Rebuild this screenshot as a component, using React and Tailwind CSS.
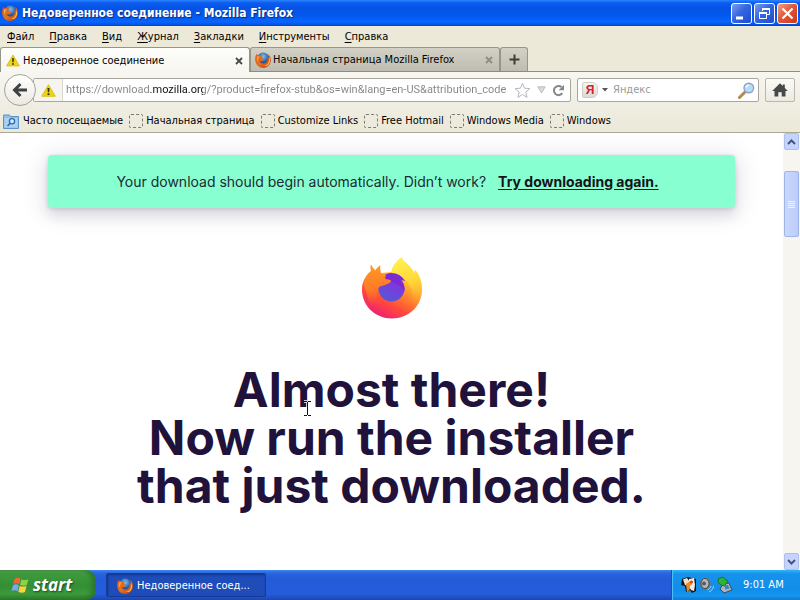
import React from "react";

const ui = "font-['DejaVu_Sans_Condensed','DejaVu_Sans',sans-serif]";

function OldFirefox({ className }) {
  return (
    <svg viewBox="0 0 16 16" className={className} aria-hidden="true">
      <defs>
        <radialGradient id="globe" cx="0.5" cy="0.3" r="0.7">
          <stop offset="0" stopColor="#7fc4ee" />
          <stop offset="0.6" stopColor="#2a5ea8" />
          <stop offset="1" stopColor="#142a66" />
        </radialGradient>
        <linearGradient id="fur" x1="0" y1="0" x2="1" y2="1">
          <stop offset="0" stopColor="#d9541a" />
          <stop offset="0.5" stopColor="#e8701c" />
          <stop offset="1" stopColor="#b93a12" />
        </linearGradient>
      </defs>
      <circle cx="8.2" cy="7" r="6.4" fill="url(#globe)" />
      <path d="M1.2 2.2C.2 4.400 0 6.500.2 8.500.7 13 4 15.900 8.200 15.900c4.500 0 7.700-3.500 7.700-7.900 0-2.600-1-4.900-2.900-6.300.9 1.600 1.200 3 .9 4.600-.3-.8-.7-1.300-1.200-1.700.6 3.700-.9 6.700-4 6.900-2.300.1-3.900-1.400-3.900-2.600.9.600 2.300.5 3-.3.5-.5 1.300-.5 1.400-1 0-.5-1-1-1.600-1.100-.8-.2-1.200-.8-1.200-1.200.3-.7 1-.9 1.700-1.500-.9 0-1.800-.1-2.700-.7-1-.3-1.900-.2-2.700.2-.7-.4-1.200-1-1.500-2.100z" fill="url(#fur)" />
      <path d="M14 5.500c.8 4.600-1.800 8.300-5.800 8.400 4 .9 7-2 6.800-6-.1-1-.5-1.800-1-2.400z" fill="#fbc944" />
      <path d="M2 4.600c1-.5 2-.3 2.900.1-.9.500-1.500 1.300-1.500 2.500-.6.700-.6 2 .1 3.200C1.700 9 1.300 6.500 2 4.600z" fill="#f5a43a" />
    </svg>
  );
}

function Warning({ className }) {
  return (
    <svg viewBox="0 0 16 14" className={className} aria-hidden="true">
      <path d="M8 .8 15.300 13.200H.7z" fill="#ecd41c" stroke="#d8bd10" strokeWidth="1" strokeLinejoin="round" />
      <path d="M6.900 4.300h2.200l-.4 4.700H7.300zM7 10h2v1.800H7z" fill="#35300a" />
    </svg>
  );
}

function CloseX({ className }) {
  return (
    <svg viewBox="0 0 8 8" className={className} aria-hidden="true">
      <path d="M1 1l6 6M7 1L1 7" stroke="currentColor" strokeWidth="1.800" />
    </svg>
  );
}

function FirefoxLogo() {
  return (
    <svg viewBox="0 0 62 64" className="h-16 w-[62px]" role="img" aria-label="Firefox">
      <defs>
        <linearGradient id="body" x1="0.85" y1="0.1" x2="0.35" y2="1">
          <stop offset="0" stopColor="#fff04a" />
          <stop offset="0.3" stopColor="#ffc035" />
          <stop offset="0.5" stopColor="#ff8a2b" />
          <stop offset="0.75" stopColor="#ff4a3a" />
          <stop offset="1" stopColor="#f01f72" />
        </linearGradient>
        <linearGradient id="flame" x1="0.4" y1="0" x2="0.6" y2="1">
          <stop offset="0" stopColor="#fff24f" />
          <stop offset="0.5" stopColor="#ffd738" />
          <stop offset="1" stopColor="#ff9c2e" stopOpacity="0" />
        </linearGradient>
        <linearGradient id="core" x1="0.8" y1="0" x2="0.3" y2="1">
          <stop offset="0" stopColor="#8a2be0" />
          <stop offset="0.5" stopColor="#7440dc" />
          <stop offset="1" stopColor="#5458d8" />
        </linearGradient>
        <linearGradient id="head" x1="0.3" y1="0" x2="0.4" y2="1">
          <stop offset="0" stopColor="#ff9a24" />
          <stop offset="0.6" stopColor="#ff7a28" />
          <stop offset="1" stopColor="#ff5a34" stopOpacity="0" />
        </linearGradient>
      </defs>
      <path d="M10 8.500c-.6 2.300-.5 4.500.1 6.500C4 20 1 26.500 1 33.500 1 50 14.500 62.500 31 62.500S61 50 61 33.500c0-8.500-3-15-7-19.500l-.5 3.500C50 9.500 43.500 7 40.500 1.500c-5 3.200-9 8.500-10 14.500L20 17c-.8-2.500-1.200-5-.8-7.500-2 1.200-3.700 3-4.700 5C12.500 12.700 11 11 10 8.500z" fill="url(#body)" />
      <path d="M40.500 1.500c3 5.500 9.500 8 13 16l.5-3.500c4 4.500 7 11 7 19.500 0 8-4 15-9 19 1-9 0-19-5-26-4.500-5-12-7-16.500-10 1-6 5-11.800 10-15z" fill="url(#flame)" />
      <circle cx="30.500" cy="32.500" r="13" fill="url(#core)" />
      <path d="M24 18.500c7-3.500 16-1 20 6.500-2.300-.8-3.500-.8-5-.5 3.500 3 5 7 4.500 11-3-6-9.500-10-18-10z" fill="#7a2cd2" />
      <path d="M10 8.500c-.6 2.300-.5 4.500.1 6.500C5.500 18.500 3.500 23 3 28.500L8 46c2 4 7 6 13 2-3-3.500-5.300-8-4.800-13 .2-1.800.8-3 1.800-4 3-1.500 7.500-2 10-3.700 1.800-1 2.600-2.500 1.500-3.300-1.500-.6-3.500-.5-5-1-1-1.500-.5-3 1-4.500-2 0-4 0-5.500-1-.8-2.800-1.200-5.500-.8-8-2 1.200-3.700 3-4.700 5C12.500 12.700 11 11 10 8.500z" fill="url(#head)" />
    </svg>
  );
}

function WindowsFlag() {
  return (
    <svg viewBox="0 0 18 18" className="h-[18px] w-[18px]" aria-hidden="true">
      <path d="M3.500 3C5.500 1.300 7.800 1.400 9.500 2.700L8.200 8.300C6.400 7 4 7 2.200 8.300z" fill="#ee6a35" />
      <path d="M10.400 3.200c2 1.200 4.400 1.200 7 0L15.800 8.900c-2.200 1.100-4.600 1-6.800-.2z" fill="#8fd04a" />
      <path d="M1.900 9.400c2-1.400 4.300-1.400 6 0l-1.400 5.900c-1.700-1.300-4-1.200-6 0z" fill="#7ba6f5" />
      <path d="M8.800 9.700c2.200 1.200 4.400 1.200 6.800 0L14 16c-2 1.100-4.600 1-6.700-.3z" fill="#fbd33b" />
    </svg>
  );
}

const captionBase = "flex h-[21px] w-[21px] items-center justify-center rounded-[3px] border border-white";

function TitleBar() {
  return (
    <header className="flex h-[26px] shrink-0 items-center bg-[linear-gradient(#2b83ff_0px,#0a5cf0_3px,#0553e4_8px,#0458ee_16px,#0666ff_22px,#0450dc_25px,#0340bb_26px)] pr-[2px] pl-[2px]">
      <OldFirefox className="h-4 w-4 shrink-0" />
      <h1 className="ml-1 flex-1 truncate text-[12px] leading-[18px] font-bold text-white [text-shadow:1px_1px_1px_#0a2a80]">
        Недоверенное соединение - Mozilla Firefox
      </h1>
      <div className="flex gap-[2px]">
        <button aria-label="Свернуть" className={captionBase + " bg-[linear-gradient(135deg,#7e9cf0,#3566e0_45%,#1d4ccf)]"}>
          <svg viewBox="0 0 19 19" className="h-[19px] w-[19px]"><path d="M4 12.500h7v3H4z" fill="#fff" /></svg>
        </button>
        <button aria-label="Свернуть в окно" className={captionBase + " bg-[linear-gradient(135deg,#7e9cf0,#3566e0_45%,#1d4ccf)]"}>
          <svg viewBox="0 0 19 19" className="h-[19px] w-[19px]" fill="none" stroke="#fff">
            <path d="M7.500 7V4.500h7v6H12" /><path d="M7 5h8" strokeWidth="2" />
            <path d="M4.500 8.500h7v6h-7z" /><path d="M4 9h8" strokeWidth="2" />
          </svg>
        </button>
        <button aria-label="Закрыть" className={captionBase + " bg-[linear-gradient(135deg,#f0a088,#e2583a_45%,#c8391a)]"}>
          <svg viewBox="0 0 19 19" className="h-[19px] w-[19px]"><path d="M4.500 4.500l10 10M14.500 4.500l-10 10" stroke="#fff" strokeWidth="2.200" /></svg>
        </button>
      </div>
    </header>
  );
}

const menus = ["Файл", "Правка", "Вид", "Журнал", "Закладки", "Инструменты", "Справка"];

function MenuBar() {
  return (
    <nav aria-label="Меню" className="flex h-[21px] shrink-0 items-center gap-[15px] pl-[7px]">
      {menus.map((m) => (
        <button key={m} className="leading-4">
          <span className="underline underline-offset-2">{m[0]}</span>{m.slice(1)}
        </button>
      ))}
    </nav>
  );
}

function Tabs() {
  return (
    <div className="flex h-[25px] shrink-0 border-b border-[#8f8d80] bg-[#ece9d8]">
      <div className="-mb-px flex w-[250px] items-center rounded-t-[3px] border border-b-0 border-[#97958a] bg-[linear-gradient(#fdfdfa,#f7f6f0)] pt-px pr-[6px] pl-[5px]">
        <button className="flex min-w-0 flex-1 items-center gap-[3px] text-left">
          <Warning className="h-[13px] w-[14px] shrink-0" />
          <span className="truncate">Недоверенное соединение</span>
        </button>
        <button aria-label="Закрыть вкладку" className="text-[#4a4a4a]"><CloseX className="h-2 w-2" /></button>
      </div>
      <div className="flex w-[250px] items-center rounded-t-[3px] border border-b-0 border-[#97958a] bg-[linear-gradient(#d3d1c5,#bfbdb1)] pt-px pr-[6px] pl-1">
        <button className="flex min-w-0 flex-1 items-center gap-[2px] text-left">
          <OldFirefox className="h-4 w-4 shrink-0" />
          <span className="truncate">Начальная страница Mozilla Firefox</span>
        </button>
        <button aria-label="Закрыть вкладку" className="text-[#8d8b82]"><CloseX className="h-2 w-2" /></button>
      </div>
      <button aria-label="Новая вкладка" className="flex w-7 items-center justify-center rounded-t-[3px] border border-b-0 border-[#97958a] bg-[linear-gradient(#d3d1c5,#bfbdb1)]">
        <svg viewBox="0 0 11 11" className="h-[11px] w-[11px]"><path d="M5.500 0.500v10M0.500 5.500h10" stroke="#3c3c38" strokeWidth="2" /></svg>
      </button>
    </div>
  );
}

function NavBar() {
  return (
    <div className="flex h-9 shrink-0 items-center bg-[linear-gradient(#f7f6f0,#efede1)] pr-[5px] pl-1">
      <button aria-label="Назад" className="z-10 -mr-[3px] flex h-[32px] w-[32px] shrink-0 items-center justify-center rounded-full border border-[#a5a399] bg-[linear-gradient(#ffffff,#ebe9df)]">
        <svg viewBox="0 0 16 16" className="h-4 w-4"><path d="M15 8H3M8.500 2 2.500 8l6 6" fill="none" stroke="#3e4144" strokeWidth="3" /></svg>
      </button>
      <div className="flex h-6 min-w-0 flex-1 items-center rounded-[2px] border border-[#a9a79d] bg-white">
        <div className="flex h-full w-[29px] shrink-0 items-center justify-center border-r border-[#d9d7cd] bg-[#f5f4ee]">
          <Warning className="h-[13px] w-[15px]" />
        </div>
        <input
          aria-label="Адрес"
          readOnly
          value="https://download.mozilla.org/?product=firefox-stub&os=win&lang=en-US&attribution_code"
          className="min-w-0 flex-1 bg-[linear-gradient(90deg,#858585_86px,#101010_86px,#101010_140px,#858585_140px)] bg-clip-text pl-[3px] font-['Roboto',sans-serif] text-transparent outline-none"
        />
        <button aria-label="Добавить закладку">
          <svg viewBox="0 0 17 17" className="h-[17px] w-[17px]"><path d="M8.500 1.200l2.100 5 5.300.4-4.100 3.500 1.300 5.300-4.600-2.900-4.600 2.900 1.300-5.300L1.100 6.600l5.300-.4z" fill="#fdfdfd" stroke="#b4b8c0" strokeLinejoin="round" /></svg>
        </button>
        <button aria-label="Журнал адресов" className="mx-[6px]">
          <svg viewBox="0 0 9 8" className="h-2 w-[9px]"><path d="M.8.800h7.400L4.500 7z" fill="#dcdcdc" stroke="#bcbcbc" /></svg>
        </button>
        <button aria-label="Обновить" className="mr-[5px]">
          <svg viewBox="0 0 13 13" className="h-[13px] w-[13px]"><path d="M10.300 9.200A4.600 4.600 0 1 1 9.500 3" fill="none" stroke="#83868a" strokeWidth="2" /><path d="M12 .8v5.400H6.600z" fill="#83868a" /></svg>
        </button>
      </div>
      <div className="ml-[6px] flex h-6 w-[182px] shrink-0 items-center rounded-[2px] border border-[#a9a79d] bg-white pr-[3px] pl-1">
        <button aria-label="Выбор поисковой системы" className="flex items-center gap-1">
          <span className="flex h-[16px] w-[16px] items-center justify-center rounded-[2px] rounded-r-[6px] border border-[#cfcdc7] bg-[linear-gradient(#f6f5f3,#dddbd7)] font-['Liberation_Sans',sans-serif] text-[12px] leading-none font-bold text-[#d3202c]">Я</span>
          <svg viewBox="0 0 6 4" className="h-1 w-[6px]"><path d="M0 0h6L3 3.500z" fill="#555" /></svg>
        </button>
        <input aria-label="Поиск" placeholder="Яндекс" className="ml-[5px] min-w-0 flex-1 outline-none placeholder:text-[#9b9b9b]" />
        <button aria-label="Искать">
          <svg viewBox="0 0 17 17" className="h-[17px] w-[17px]">
            <path d="M1.500 15.500 7 10" stroke="#b98550" strokeWidth="3" strokeLinecap="round" />
            <circle cx="10.800" cy="6" r="4.800" fill="#b8dcf8" stroke="#8ba4c4" strokeWidth="1.400" />
            <path d="M8 5.500c.4-1.600 1.600-2.400 3-2.400" stroke="#fff" fill="none" strokeWidth="1.200" />
          </svg>
        </button>
      </div>
      <button aria-label="Домой" className="ml-[6px] flex h-6 w-[30px] shrink-0 items-center justify-center rounded-[2px] border border-[#b9b7ac] bg-[linear-gradient(#fbfaf6,#eceae0)]">
        <svg viewBox="0 0 16 14" className="h-[14px] w-4"><path d="M8 .3l2.800 2.700V1.500h2v3.400L15.800 8H13.500v5.500H9.700V9.300H6.300v4.200H2.500V8H.2z" fill="#46494c" /></svg>
      </button>
    </div>
  );
}

const bookmarks = ["Начальная страница", "Customize Links", "Free Hotmail", "Windows Media", "Windows"];

function BookmarksBar() {
  return (
    <nav aria-label="Закладки" className="flex h-[25px] shrink-0 items-center gap-[6px] border-b border-[#aba99a] bg-[linear-gradient(#efede1,#ece9d8)] pt-[2px] pl-[3px] whitespace-nowrap">
      <a href="#frequent" className="flex items-center gap-1">
        <svg viewBox="0 0 16 15" className="h-[15px] w-4" aria-hidden="true">
          <path d="M.5 2.500V1h6l1 1.500h8V14.500H.5z" fill="#8ec0ea" stroke="#5b93c7" />
          <path d="M1.500 4h13v9.500h-13z" fill="#aad2f4" />
          <circle cx="9" cy="7.300" r="2.600" fill="#d6ecfc" stroke="#2d6aa8" strokeWidth="1.300" />
          <path d="M7.200 9.200 4.500 12" stroke="#2d6aa8" strokeWidth="1.600" />
        </svg>
        Часто посещаемые
      </a>
      {bookmarks.map((b) => (
        <a key={b} href="#bookmark" className="flex items-center gap-[3px]">
          <span className="h-[14px] w-[14px] rounded-[2px] border border-dashed border-[#7d7b72]" />
          {b}
        </a>
      ))}
    </nav>
  );
}

const sbButton = "flex h-[17px] w-full shrink-0 items-center justify-center rounded-[2px] border border-[#aebfee] bg-[#c6d4fc]";

function ScrollBar() {
  return (
    <div className="flex w-[17px] shrink-0 flex-col bg-[#f6f5f0] px-px">
      <button aria-label="Прокрутить вверх" className={sbButton}>
        <svg viewBox="0 0 9 6" className="h-[6px] w-[9px]"><path d="M1 5l3.500-3.500L8 5" fill="none" stroke="#43557e" strokeWidth="2" /></svg>
      </button>
      <div className="h-[21px] shrink-0" />
      <div className="flex h-[66px] w-full shrink-0 flex-col items-center justify-center gap-px rounded-[2px] border border-[#9fb4ea] bg-[linear-gradient(90deg,#cbd8fd,#bccdfa)]">
        {[0, 1, 2, 3].map((i) => (
          <span key={i} className="h-px w-[7px] bg-[#eef3ff]" />
        ))}
      </div>
      <div className="flex-1" />
      <button aria-label="Прокрутить вниз" className={sbButton}>
        <svg viewBox="0 0 9 6" className="h-[6px] w-[9px]"><path d="M1 1l3.500 3.500L8 1" fill="none" stroke="#43557e" strokeWidth="2" /></svg>
      </button>
    </div>
  );
}

function Page() {
  return (
    <div className="flex min-h-0 flex-1 bg-white">
      <main className="flex min-w-0 flex-1 flex-col items-center overflow-hidden px-12 pt-[22px] font-['Inter',sans-serif]">
        <div className="flex h-[53px] w-full shrink-0 items-center justify-center gap-3 rounded-[4px] bg-[#88ffd1] pr-2 text-[14px] leading-5 text-[#1c2b33] shadow-[0_8px_12px_1px_rgba(29,17,51,0.08),0_3px_24px_4px_rgba(9,32,77,0.1),0_1px_4px_rgba(29,17,51,0.15)]">
          <p>Your download should begin automatically. Didn’t work?</p>
          <a href="#download" className="font-bold text-[#15141a] underline underline-offset-2">Try downloading again.</a>
        </div>
        <div className="mt-12 shrink-0"><FirefoxLogo /></div>
        <div className="relative mt-[46px]">
          <h2 className="text-center text-[48px] leading-[48px] font-bold whitespace-nowrap text-[#20123a]">
            Almost there!<br />Now run the installer<br />that just downloaded.
          </h2>
          <svg viewBox="0 0 9 17" className="absolute top-[34px] left-[166px] h-[17px] w-[9px]" aria-hidden="true">
            <path d="M1 1.500h3M5 1.500h3M4.500 2v13M1 15.500h3M5 15.500h3" fill="none" stroke="#fff" strokeWidth="2.500" />
            <path d="M1 1.500h3M5 1.500h3M4.500 2v13M1 15.500h3M5 15.500h3" fill="none" stroke="#111" />
          </svg>
        </div>
      </main>
      <ScrollBar />
    </div>
  );
}

function TaskBar() {
  return (
    <footer className="flex h-[30px] shrink-0 bg-[linear-gradient(#3f86f2_0px,#2a66e0_3px,#245bd8_8px,#245cdc_24px,#1c46b0_30px)] text-white">
      <button className="flex w-24 items-center gap-1 rounded-r-[10px] bg-[linear-gradient(#5aa85a_0px,#3f9a3f_4px,#348f34_16px,#3c9a3c_24px,#2a7a2a_30px)] pl-[11px] font-['Open_Sans','Noto_Sans',sans-serif] text-[17px] leading-6 font-bold italic shadow-[inset_-4px_0_5px_#2b742b] [text-shadow:1px_1px_2px_#1b4a1b]">
        <WindowsFlag />start
      </button>
      <button className="my-[3px] ml-[10px] flex w-40 items-center gap-1 rounded-[2px] border border-[#163c98] bg-[#1e4cb8] pt-[2px] pl-[10px] shadow-[inset_1px_1px_2px_#123487]">
        <OldFirefox className="h-4 w-4 shrink-0" />
        <span className="truncate">Недоверенное соед...</span>
      </button>
      <div className="flex-1" />
      <div className="flex w-[129px] items-center border-l border-[#0b56b8] bg-[linear-gradient(#2fb4f8_0px,#1592ec_4px,#128ee9_20px,#1597f0_26px,#0f72c8_30px)] pl-[9px] shadow-[inset_1px_0_1px_#4fc4fc]">
        <svg viewBox="0 0 52 18" className="h-[18px] w-[52px] shrink-0" aria-hidden="true">
          <path d="M1 3 7 1l8 2v12l-4 2-2-3-4 2-1-6-4-1z" fill="#161616" />
          <path d="M2 3.500 6 2l3 4-2 4-3-1z" fill="#f0e2c6" />
          <path d="M8 3l5-1 1 7-1 6-3-1-2-4z" fill="#f2ede0" />
          <path d="M5 8l4-3 2 3-2 2v3l-3 3z" fill="#ec8a22" />
          <circle cx="10.500" cy="6" r="1.500" fill="#d63b1c" />
          <path d="M18.500 6 22 2h5l3 5-2 6-5 1-4-4z" fill="#6d7680" />
          <ellipse cx="24" cy="7.500" rx="4" ry="5" fill="#b4b9bc" stroke="#42484e" />
          <circle cx="23" cy="7.500" r="2" fill="#565c62" />
          <path d="M28 16c2.500-1 4.500-3.500 4.500-6M26.500 14c2-1 3.500-2.500 3.500-4" fill="none" stroke="#9ed4fa" />
          <path d="M42 8l6-1 3 7-8 3-4-4z" fill="#a9b4c0" stroke="#3c4858" />
          <path d="M43.500 9.500l3.500-.5 1.500 3.500-4 1z" fill="#3d7fb8" />
          <path d="M37 3l5-2 1.500 2 3.500 2-3.500 5-3-1-3-2z" fill="#2db338" stroke="#147a22" />
        </svg>
        <time className="ml-[10px] whitespace-nowrap">9:01 AM</time>
      </div>
    </footer>
  );
}

export default function App() {
  return (
    <div className={ui + " flex h-screen w-full flex-col overflow-hidden bg-[#ece9d8] text-[11px] leading-4 text-black"}>
      <TitleBar />
      <MenuBar />
      <Tabs />
      <NavBar />
      <BookmarksBar />
      <Page />
      <TaskBar />
    </div>
  );
}
